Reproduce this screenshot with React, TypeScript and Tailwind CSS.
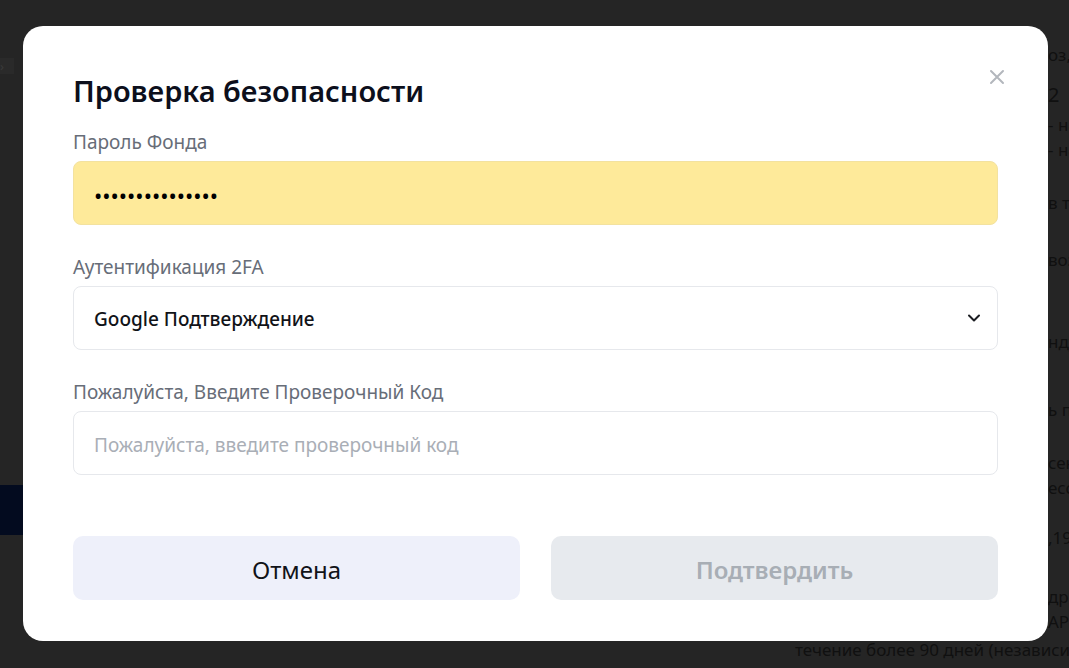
import { useState } from 'react';

const bgLines = [
  { y: 'mt-[44px]', t: 'оз, 2024' },
  { y: 'mt-[18px] text-[20px]', t: '2' },
  { y: 'mt-[8px]', t: '- на счёт' },
  { y: 'mt-[3px]', t: '- на счёт' },
  { y: 'mt-[31px]', t: 'в течение' },
  { y: 'mt-[35px]', t: 'воз' },
  { y: 'mt-[60px]', t: 'нду' },
  { y: 'mt-[46px]', t: 'ь по' },
  { y: 'mt-[31px]', t: 'сен' },
  { y: 'mt-[3px]', t: 'есс' },
  { y: 'mt-[28px]', t: ',19' },
  { y: 'mt-[37px]', t: 'дре' },
  { y: 'mt-[3px]', t: ' AP' },
];

function Field({ label, children }: { label: string; children: React.ReactNode }) {
  return (
    <div className="flex flex-col gap-[7px]">
      <label className="text-[19px] leading-[24px] text-[#676d78]">{label}</label>
      {children}
    </div>
  );
}

export default function App() {
  const [code, setCode] = useState('');

  return (
    <div
      className="relative h-screen w-screen overflow-hidden bg-[#252525]"
      style={{ fontFamily: '"Noto Sans", "Open Sans", sans-serif' }}
    >
      {/* page behind the dimmed overlay */}
      <div className="flex h-full">
        <aside className="flex w-[240px] flex-col">
          <div className="mt-[58px] flex h-[16px] w-[14px] items-center bg-[#2a2a2a] text-[13px] leading-none text-[#3a3a3a]">›</div>
          <div className="mt-[411px] h-[50px] bg-[#030b1f]" />
        </aside>
        <main className="flex-1" />
        <section className="flex w-[274px] flex-col text-[17px] leading-[22px] text-[#101010]">
          {bgLines.map((l, i) => (
            <div key={i} className={`${l.y} whitespace-nowrap pl-[253px]`}>
              {l.t}
            </div>
          ))}
          <div className="mt-[6px] whitespace-nowrap">течение более 90 дней (независимо</div>
        </section>
      </div>

      {/* modal */}
      <div className="absolute left-[23px] top-[26px] flex h-[615px] w-[1025px] flex-col rounded-[20px] bg-white px-[50px] pb-[41px] pt-[47px]">
        <button className="absolute right-[42px] top-[42px] flex h-[18px] w-[18px] items-center justify-center text-[#b3b7bd]">
          <svg width="16" height="16" viewBox="0 0 16 16" fill="none" stroke="currentColor" strokeWidth="2" strokeLinecap="round">
            <path d="M2 2l12 12M14 2L2 14" />
          </svg>
        </button>

        <h2 className="text-[29px] font-semibold leading-[36px] text-[#0c0f1c]">Проверка безопасности</h2>

        <div className="mt-[21px] flex flex-col gap-[30px]">
          <Field label="Пароль Фонда">
            <div className="flex h-[64px] items-center rounded-[8px] border border-[#f3e29f] bg-[#feea9a] px-[20px] pt-[3px]">
              <span className="text-[22px] leading-none text-black">•••••••••••••••</span>
            </div>
          </Field>

          <Field label="Аутентификация 2FA">
            <div className="flex h-[64px] items-center justify-between rounded-[8px] border border-[#e6e8ec] bg-white pl-[20px] pr-[16px]">
              <span className="pt-[3px] text-[19px] font-medium text-[#111318]">Google Подтверждение</span>
              <svg width="14" height="10" viewBox="0 0 14 10" fill="none" stroke="#1b1d22" strokeWidth="2" strokeLinecap="round" strokeLinejoin="round">
                <path d="M2 2.5l5 5 5-5" />
              </svg>
            </div>
          </Field>

          <Field label="Пожалуйста, Введите Проверочный Код">
            <input
              value={code}
              onChange={(e) => setCode(e.target.value)}
              placeholder="Пожалуйста, введите проверочный код"
              className="h-[64px] rounded-[8px] border border-[#e6e8ec] bg-white px-[20px] pt-[4px] text-[19px] text-[#111318] outline-none placeholder:text-[#a9aeb6]"
            />
          </Field>
        </div>

        <div className="mt-[61px] grid grid-cols-2 gap-[31px]">
          <button className="h-[64px] rounded-[10px] bg-[#eef0fa] pt-[4px] text-[24px] text-[#111318]">Отмена</button>
          <button className="h-[64px] rounded-[10px] bg-[#e7eaee] pt-[4px] text-[24px] font-semibold text-[#a8aeb5]">Подтвердить</button>
        </div>
      </div>
    </div>
  );
}
